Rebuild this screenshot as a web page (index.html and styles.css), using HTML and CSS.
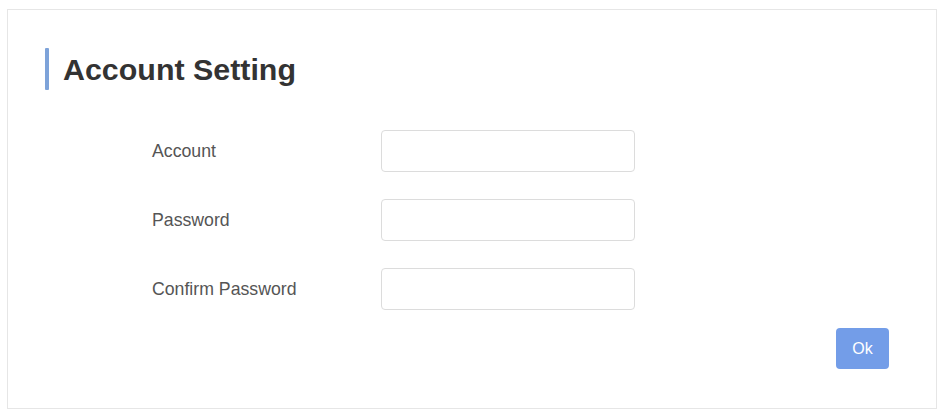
FILE: index.html
```html
<!DOCTYPE html>
<html lang="en">
<head>
<meta charset="utf-8">
<title>Account Setting</title>
<link rel="stylesheet" href="styles.css">
</head>
<body>
<div class="card">
  <div class="title">
    <span class="title-bar"></span>
    <h1 class="title-text">Account Setting</h1>
  </div>
  <form class="form">
    <div class="row">
      <label class="label" for="acc">Account</label>
      <input class="input" id="acc" type="text">
    </div>
    <div class="row">
      <label class="label" for="pw">Password</label>
      <input class="input" id="pw" type="password">
    </div>
    <div class="row">
      <label class="label" for="pw2">Confirm Password</label>
      <input class="input" id="pw2" type="password">
    </div>
    <div class="actions">
      <button class="btn" type="button">Ok</button>
    </div>
  </form>
</div>
</body>
</html>
```
FILE: styles.css
```css
html, body {
  margin: 0;
  padding: 0;
  background: #ffffff;
  font-family: "Liberation Sans", Arial, sans-serif;
}
.card {
  box-sizing: border-box;
  margin: 9px 0 0 7px;
  width: 930px;
  height: 400px;
  border: 1px solid #e6e6e6;
  background: #fff;
  padding: 38px 47px 0 37px;
}
.title {
  display: flex;
  align-items: center;
  height: 42px;
}
.title-bar {
  width: 4px;
  height: 42px;
  background: #7ea3d9;
  border-radius: 1px;
}
.title-text {
  margin: 0 0 0 14px;
  font-size: 30.4px;
  font-weight: bold;
  color: #333;
  line-height: 42px;
}
.form {
  margin: 40px 0 0 0;
  padding-left: 107px;
  display: flex;
  flex-direction: column;
  gap: 27px;
}
.row {
  display: flex;
  align-items: center;
  height: 42px;
}
.label {
  width: 229px;
  font-size: 17.7px;
  color: #555;
}
.input {
  box-sizing: border-box;
  width: 254px;
  height: 42px;
  border: 1px solid #dcdcdc;
  border-radius: 4px;
  background: #fff;
  outline: none;
  margin: 0;
}
.actions {
  display: flex;
  justify-content: flex-end;
  margin-top: -9px;
}
.btn {
  width: 53px;
  height: 41px;
  border: none;
  border-radius: 4px;
  background: #739de8;
  color: #fff;
  font-family: "Liberation Sans", Arial, sans-serif;
  font-size: 16px;
  padding: 0;
}
```
